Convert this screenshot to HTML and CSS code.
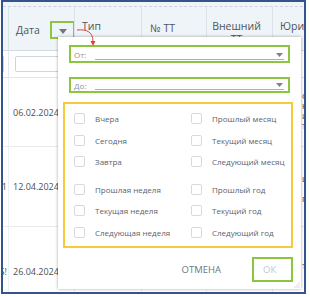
FILE: index.html
```html
<!DOCTYPE html>
<html lang="ru">
<head>
<meta charset="utf-8">
<link rel="stylesheet" href="styles.css">
</head>
<body>
<div class="frame">
  <div class="grid">
    <div class="dash"></div>
    <div class="hcell c0"></div>
    <div class="hcell c1"><span class="hl">Дата</span><span class="fbtn"><svg width="8" height="5" viewBox="0 0 8 5"><path d="M0 0h8L4 5z" fill="#6d7882"/></svg></span></div>
    <div class="hcell c2 top"><span>Тип</span></div>
    <div class="hcell c3"><span>№ ТТ</span></div>
    <div class="hcell c4 top"><span>Внешний<br>ТТ</span></div>
    <div class="hcell c5 top"><span>Юрид</span></div>

    <div class="fcell c0"><span class="inp"></span></div>
    <div class="fcell c1"><span class="inp"></span></div>
    <div class="fcell c2"></div>
    <div class="fcell c3"></div>
    <div class="fcell c4"></div>
    <div class="fcell c5"></div>

    <div class="bcell c0 r1"></div>
    <div class="bcell c1 r1">06.02.2024</div>
    <div class="bcell c2 r1"></div>
    <div class="bcell c3 r1"></div>
    <div class="bcell c4 r1"></div>
    <div class="bcell c5 r1 frag">О<br>Ю<br>И<br>Т</div>

    <div class="bcell c0 r2 tail">00001</div>
    <div class="bcell c1 r2">12.04.2024</div>
    <div class="bcell c2 r2"></div>
    <div class="bcell c3 r2"></div>
    <div class="bcell c4 r2"></div>
    <div class="bcell c5 r2 frag">Щ<br>Г</div>

    <div class="bcell c0 r3 tail">0005!</div>
    <div class="bcell c1 r3">26.04.2024</div>
    <div class="bcell c2 r3"></div>
    <div class="bcell c3 r3"></div>
    <div class="bcell c4 r3"></div>
    <div class="bcell c5 r3 frag">Т</div>
  </div>

  <div class="popup">
    <div class="field from">
      <span class="flabel">От:</span><span class="fline"></span>
      <svg class="caret" width="7" height="4" viewBox="0 0 7 4"><path d="M0 0h7L3.5 4z" fill="#7a848c"/></svg>
    </div>
    <div class="field to">
      <span class="flabel">До:</span><span class="fline"></span>
      <svg class="caret" width="7" height="4" viewBox="0 0 7 4"><path d="M0 0h7L3.5 4z" fill="#7a848c"/></svg>
    </div>
    <div class="presets">
      <div class="group">
        <label class="opt"><span class="cb"></span>Вчера</label>
        <label class="opt"><span class="cb"></span>Прошлый месяц</label>
        <label class="opt"><span class="cb"></span>Сегодня</label>
        <label class="opt"><span class="cb"></span>Текущий месяц</label>
        <label class="opt"><span class="cb"></span>Завтра</label>
        <label class="opt"><span class="cb"></span>Следующий месяц</label>
      </div>
      <div class="group">
        <label class="opt"><span class="cb"></span>Прошлая неделя</label>
        <label class="opt"><span class="cb"></span>Прошлый год</label>
        <label class="opt"><span class="cb"></span>Текущая неделя</label>
        <label class="opt"><span class="cb"></span>Текущий год</label>
        <label class="opt"><span class="cb"></span>Следующая неделя</label>
        <label class="opt"><span class="cb"></span>Следующий год</label>
      </div>
    </div>
    <div class="actions">
      <span class="btn cancel">ОТМЕНА</span>
      <span class="btn ok">ОК</span>
    </div>
    <svg class="grip" width="6" height="6" viewBox="0 0 6 6">
      <circle cx="5" cy="1" r="0.6" fill="#b5bcc2"/>
      <circle cx="3" cy="3" r="0.6" fill="#b5bcc2"/>
      <circle cx="5" cy="3" r="0.6" fill="#b5bcc2"/>
      <circle cx="1" cy="5" r="0.6" fill="#b5bcc2"/>
      <circle cx="3" cy="5" r="0.6" fill="#b5bcc2"/>
      <circle cx="5" cy="5" r="0.6" fill="#b5bcc2"/>
    </svg>
  </div>

  <svg class="arrow" width="24" height="22" viewBox="0 0 24 22">
    <path d="M1 2 C11 1 17 4 17 14" fill="none" stroke="#d9443c" stroke-width="1"/>
    <path d="M14.5 13 L17 18 L19.5 13 Z" fill="#d9443c"/>
  </svg>
</div>
</body>
</html>
```
FILE: styles.css
```css
* { box-sizing: border-box; }
html, body { margin: 0; padding: 0; background: #fff; }
body { font-family: "Open Sans", "Noto Sans", sans-serif; }

.frame {
  position: relative;
  margin-left: 1px;
  width: 305px;
  height: 294px;
  border: 2px solid #33558c;
  overflow: hidden;
  background: #fff;
}

.grid {
  display: grid;
  grid-template-columns: 6px 66px 67px 65px 66px 40px;
  grid-template-rows: 5px 44px 27px 69px 80px 90px;
}

.dash {
  grid-column: 1 / -1;
  background: #eef4f7;
  border-bottom: 1px dashed #cdd6dc;
}

.hcell {
  background: #eef4f7;
  border-right: 1px solid #dbe3e8;
  border-bottom: 1px solid #d3dce2;
  font-size: 10.5px;
  color: #4f555b;
  display: flex;
  align-items: center;
  padding-left: 7px;
  line-height: 13px;
  white-space: nowrap;
  overflow: hidden;
}
.hcell.top { align-items: flex-start; padding-top: 13px; }
.hcell.c3 span { margin-left: 1px; }
.hcell.c4 span { display: block; text-align: center; width: 100%; }
.hcell.c4 { padding-left: 2px; padding-right: 8px; }
.hcell.c1 { padding-left: 7px; padding-top: 3px; justify-content: space-between; padding-right: 0; }
.hcell.c0 { padding: 0; }

.fbtn {
  width: 25px;
  height: 18px;
  border: 2px solid #8cc63e;
  display: flex;
  align-items: center;
  justify-content: center;
  padding-top: 4px;
  margin-top: -1px;
  margin-right: -1px;
}

.fcell {
  border-right: 1px solid #e3e8ec;
  border-bottom: 1px solid #e1e6ea;
  padding: 5px 0 4px 6px;
}
.fcell.c0 { padding: 5px 0 4px 0; }
.fcell.c0 .inp { width: 1px; border-left: none; border-radius: 0; }
.inp {
  display: block;
  height: 16px;
  width: 60px;
  border: 1px solid #cfd5da;
  border-radius: 2px;
  background: #fff;
}

.bcell {
  border-right: 1px solid #edf0f2;
  border-bottom: 1px solid #e7ebee;
  font-size: 9px;
  color: #4a5056;
  display: flex;
  align-items: center;
  padding-left: 4px;
  white-space: nowrap;
  overflow: hidden;
}
.bcell.tail { justify-content: flex-end; padding: 0 1px 0 0; }
.bcell.frag { padding-left: 29px; line-height: 10px; align-items: flex-start; padding-top: 13px; font-size: 8px; color: #3b4148; border-right: none; }
.bcell.r2.frag { padding-top: 22px; line-height: 20px; }
.bcell.r3.frag { padding-top: 34px; }

.arrow {
  position: absolute;
  left: 73px;
  top: 26px;
}

.popup {
  position: absolute;
  left: 55px;
  top: 35px;
  width: 243px;
  height: 252px;
  background: #fff;
  box-shadow: 0 0 3px rgba(0, 0, 0, 0.35);
  padding: 8px 0 0 5px;
}

.field {
  position: relative;
  margin-left: 6px;
  width: 221px;
  height: 18px;
  border: 2px solid #8cc63e;
  display: flex;
  align-items: center;
  padding-left: 3px;
}
.field.to { margin-top: 14px; height: 16px; }
.flabel { font-size: 8px; color: #8a939a; }
.fline {
  position: absolute;
  left: 24px;
  right: 4px;
  bottom: 1px;
  border-bottom: 1px solid #a9b0b6;
}
.caret { position: absolute; right: 5px; top: 6px; }
.to .caret { top: 4px; }

.presets {
  margin-top: 9px;
  width: 230px;
  height: 146px;
  border: 2px solid #f6ca3a;
  padding: 4px 0 0 9px;
}
.group {
  display: grid;
  grid-template-columns: 117px 100px;
  grid-auto-rows: 21.5px;
}
.group + .group { margin-top: 6px; }
.opt {
  display: flex;
  align-items: center;
  font-size: 8px;
  color: #5c5f6c;
  white-space: nowrap;
}
.cb {
  width: 11px;
  height: 11px;
  border: 1px solid #d5dadf;
  border-radius: 2px;
  margin-right: 10px;
  flex: none;
}

.actions {
  display: flex;
  justify-content: flex-end;
  align-items: center;
  margin-top: 9px;
  padding-right: 8px;
  gap: 31px;
}
.btn { font-size: 9.5px; }
.cancel { color: #6b7780; }
.ok {
  width: 41px;
  height: 25px;
  border: 2px solid #8cc63e;
  color: #c3c8cc;
  display: flex;
  align-items: center;
  padding-left: 9px;
}
.grip { position: absolute; right: 1px; bottom: 1px; }
```
